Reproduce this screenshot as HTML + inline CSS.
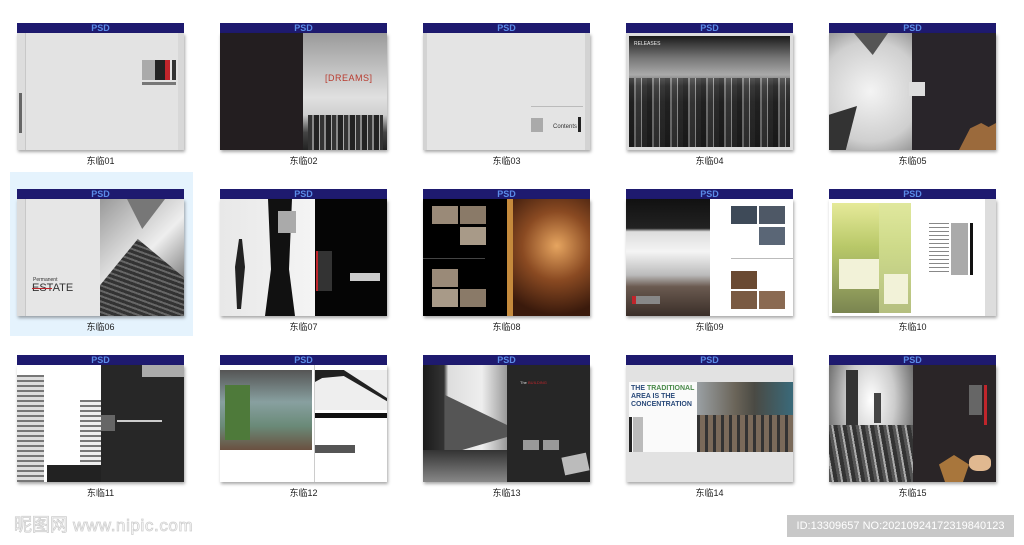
<!DOCTYPE html>
<html><head><meta charset="utf-8"><style>
*{margin:0;padding:0;box-sizing:border-box}
body{width:1024px;height:545px;background:#fff;position:relative;overflow:hidden;font-family:"Liberation Sans","Noto Sans CJK SC",sans-serif}
.t{position:absolute;width:167px}
.bar{height:10px;background:#1e1a6f;color:#5b8ce8;font:bold 9px/10px "Liberation Sans",sans-serif;text-align:center}
.img{position:relative;height:117px;overflow:hidden;box-shadow:1px 2px 3px rgba(0,0,0,.35)}
.a{position:absolute}
.lb{position:absolute;width:167px;text-align:center;font-size:9px;color:#222;line-height:12px}
.sel{position:absolute;left:10px;top:172px;width:183px;height:164px;background:#e5f3fd}
.ln{position:absolute;height:1px;background:#bbb}
</style></head><body>
<div class="sel"></div>

<div class="t" style="left:17px;top:23px"><div class="bar">PSD</div><div class="img" style="background:#e3e3e3">
<div class="a" style="left:0;top:0;width:9px;height:117px;background:#ddd;border-right:1px solid #c8c8c8"></div>
<div class="a" style="left:2px;top:60px;width:3px;height:40px;background:#666"></div>
<div class="a" style="left:125px;top:27px;width:13px;height:20px;background:#aaa"></div>
<div class="a" style="left:138px;top:27px;width:10px;height:20px;background:#222"></div>
<div class="a" style="left:148px;top:27px;width:5px;height:20px;background:#c0252b"></div>
<div class="a" style="left:155px;top:27px;width:4px;height:20px;background:#333"></div>
<div class="a" style="left:125px;top:49px;width:34px;height:3px;background:#777"></div>
<div class="a" style="left:161px;top:0;width:6px;height:117px;background:#d8d8d8"></div>
</div></div>
<div class="lb" style="left:17px;top:155px">东临01</div>

<div class="t" style="left:220px;top:23px"><div class="bar">PSD</div><div class="img" style="background:#231e20">
<div class="a" style="left:83px;top:0;width:84px;height:117px;background:linear-gradient(#9a9a9a,#e0e0e0 55%,#cfcfcf 70%,#444 85%,#222)"></div>
<div class="a" style="left:88px;top:82px;width:75px;height:35px;background:repeating-linear-gradient(90deg,#333 0 4px,#888 4px 6px,#222 6px 11px,#aaa 11px 12px)"></div>
<div class="a" style="left:105px;top:40px;font-size:9px;color:#b83a2e;letter-spacing:.5px">[DREAMS]</div>
</div></div>
<div class="lb" style="left:220px;top:155px">东临02</div>

<div class="t" style="left:423px;top:23px"><div class="bar">PSD</div><div class="img" style="background:#e4e4e4">
<div class="a" style="left:0;top:0;width:4px;height:117px;background:#d3d3d3"></div>
<div class="a" style="left:162px;top:0;width:5px;height:117px;background:#d3d3d3"></div>
<div class="ln" style="left:108px;top:73px;width:52px"></div>
<div class="a" style="left:108px;top:85px;width:12px;height:14px;background:#aaa"></div>
<div class="a" style="left:130px;top:91px;font-size:6px;color:#333">Contents</div>
<div class="a" style="left:155px;top:84px;width:3px;height:15px;background:#222"></div>
</div></div>
<div class="lb" style="left:423px;top:155px">东临03</div>

<div class="t" style="left:626px;top:23px"><div class="bar">PSD</div><div class="img" style="background:#ddd">
<div class="a" style="left:3px;top:3px;width:161px;height:111px;background:linear-gradient(#1a1a1a,#777 20%,#aaa 35%,#555 45%,#333 60%,#222)"></div>
<div class="a" style="left:3px;top:45px;width:161px;height:69px;background:repeating-linear-gradient(90deg,#111 0 5px,#999 5px 7px,#333 7px 12px,#ccc 12px 13px,#222 13px 18px);opacity:.55"></div>
<div class="a" style="left:8px;top:8px;font-size:5px;color:#eee">RELEASES</div>
</div></div>
<div class="lb" style="left:626px;top:155px">东临04</div>

<div class="t" style="left:829px;top:23px"><div class="bar">PSD</div><div class="img" style="background:#29252a">
<div class="a" style="left:0;top:0;width:83px;height:117px;background:radial-gradient(circle at 50% 50%,#f4f4f4,#cfcfcf 70%,#999)"></div>
<div class="a" style="left:25px;top:0;width:34px;height:22px;background:#555;clip-path:polygon(0 0,100% 0,55% 100%)"></div>
<div class="a" style="left:0;top:73px;width:28px;height:44px;background:#333;clip-path:polygon(0 20%,100% 0,60% 100%,0 100%)"></div>
<div class="a" style="left:80px;top:49px;width:16px;height:14px;background:#ddd"></div>
<div class="a" style="left:130px;top:90px;width:37px;height:27px;background:#9b6a3c;clip-path:polygon(30% 20%,60% 0,80% 15%,100% 0,100% 100%,0 100%)"></div>
</div></div>
<div class="lb" style="left:829px;top:155px">东临05</div>

<div class="t" style="left:17px;top:189px"><div class="bar">PSD</div><div class="img" style="background:#e6e6e6">
<div class="a" style="left:0;top:0;width:9px;height:117px;background:#dcdcdc;border-right:1px solid #c8c8c8"></div>
<div class="a" style="left:83px;top:0;width:84px;height:117px;background:linear-gradient(135deg,#999,#eee 50%,#444)"></div>
<div class="a" style="left:83px;top:40px;width:84px;height:77px;background:repeating-linear-gradient(20deg,#333 0 3px,#666 3px 5px);clip-path:polygon(0 60%,45% 0,100% 50%,100% 100%,0 100%)"></div>
<div class="a" style="left:110px;top:0;width:38px;height:30px;background:#777;clip-path:polygon(0 0,100% 0,40% 100%)"></div>
<div class="a" style="left:16px;top:78px;font-size:5px;color:#333">Permanent</div>
<div class="a" style="left:15px;top:84px;font-size:11px;color:#333;line-height:11px">ESTATE</div>
<div class="a" style="left:15px;top:89px;width:20px;height:1px;background:#c0252b"></div>
</div></div>
<div class="lb" style="left:17px;top:321px">东临06</div>

<div class="t" style="left:220px;top:189px"><div class="bar">PSD</div><div class="img" style="background:#050505">
<div class="a" style="left:0;top:0;width:95px;height:117px;background:linear-gradient(90deg,#e8e8e8,#f4f4f4)"></div>
<div class="a" style="left:45px;top:0;width:30px;height:117px;background:#111;clip-path:polygon(10% 0,90% 0,80% 60%,100% 100%,0 100%,20% 60%)"></div>
<div class="a" style="left:58px;top:12px;width:18px;height:22px;background:#aaa"></div>
<div class="a" style="left:15px;top:40px;width:10px;height:70px;background:#222;clip-path:polygon(40% 0,70% 0,100% 40%,60% 100%,20% 100%,0 40%)"></div>
<div class="a" style="left:96px;top:52px;width:2px;height:40px;background:#c0252b"></div>
<div class="a" style="left:98px;top:52px;width:14px;height:40px;background:#333"></div>
<div class="a" style="left:130px;top:74px;width:30px;height:8px;background:#ccc"></div>
</div></div>
<div class="lb" style="left:220px;top:321px">东临07</div>

<div class="t" style="left:423px;top:189px"><div class="bar">PSD</div><div class="img" style="background:#000">
<div class="a" style="left:84px;top:0;width:83px;height:117px;background:radial-gradient(circle at 60% 40%,#e6a560,#8a4a22 40%,#3a1a0c 80%)"></div>
<div class="a" style="left:84px;top:0;width:6px;height:117px;background:#c58a3c"></div>
<div class="a" style="left:9px;top:7px;width:26px;height:18px;background:#9a8a78"></div>
<div class="a" style="left:37px;top:7px;width:26px;height:18px;background:#8a7a68"></div>
<div class="a" style="left:37px;top:28px;width:26px;height:18px;background:#a89a88"></div>
<div class="a" style="left:9px;top:70px;width:26px;height:18px;background:#9a8a78"></div>
<div class="a" style="left:9px;top:90px;width:26px;height:18px;background:#a89a88"></div>
<div class="a" style="left:37px;top:90px;width:26px;height:18px;background:#8a7a68"></div>
<div class="ln" style="left:0;top:59px;width:62px;background:#444"></div>
</div></div>
<div class="lb" style="left:423px;top:321px">东临08</div>

<div class="t" style="left:626px;top:189px"><div class="bar">PSD</div><div class="img" style="background:#fff">
<div class="a" style="left:0;top:0;width:84px;height:117px;background:linear-gradient(#111 0,#222 25%,#ddd 28%,#f4f4f4 45%,#bbb 65%,#6a5a50 75%,#3a2e28)"></div>
<div class="a" style="left:6px;top:97px;width:28px;height:8px;background:#888"></div>
<div class="a" style="left:6px;top:97px;width:4px;height:8px;background:#c0252b"></div>
<div class="a" style="left:105px;top:7px;width:26px;height:18px;background:#3e4a58"></div>
<div class="a" style="left:133px;top:7px;width:26px;height:18px;background:#4e5866"></div>
<div class="a" style="left:133px;top:28px;width:26px;height:18px;background:#5a6676"></div>
<div class="ln" style="left:105px;top:59px;width:62px"></div>
<div class="a" style="left:105px;top:72px;width:26px;height:18px;background:#6a4a32"></div>
<div class="a" style="left:105px;top:92px;width:26px;height:18px;background:#7a5a42"></div>
<div class="a" style="left:133px;top:92px;width:26px;height:18px;background:#8a6a52"></div>
</div></div>
<div class="lb" style="left:626px;top:321px">东临09</div>

<div class="t" style="left:829px;top:189px"><div class="bar">PSD</div><div class="img" style="background:#fff">
<div class="a" style="left:3px;top:4px;width:79px;height:110px;background:linear-gradient(#e6ea9a,#b8c868 40%,#9aa860 70%,#7a8450)"></div>
<div class="a" style="left:50px;top:4px;width:32px;height:110px;background:rgba(220,230,160,.6)"></div>
<div class="a" style="left:10px;top:60px;width:40px;height:30px;background:#f2f2d8"></div>
<div class="a" style="left:55px;top:75px;width:24px;height:30px;background:#f2f2d8"></div>
<div class="a" style="left:100px;top:24px;width:20px;height:50px;background:repeating-linear-gradient(#888 0 1px,#fff 1px 4px)"></div>
<div class="a" style="left:122px;top:24px;width:17px;height:52px;background:#aaa"></div>
<div class="a" style="left:141px;top:24px;width:3px;height:52px;background:#111"></div>
<div class="a" style="left:156px;top:0;width:11px;height:117px;background:#ddd"></div>
</div></div>
<div class="lb" style="left:829px;top:321px">东临10</div>

<div class="t" style="left:17px;top:355px"><div class="bar">PSD</div><div class="img" style="background:#272727">
<div class="a" style="left:0;top:0;width:84px;height:117px;background:#fff"></div>
<div class="a" style="left:0;top:10px;width:27px;height:107px;background:repeating-linear-gradient(#777 0 2px,#ddd 2px 5px)"></div>
<div class="a" style="left:63px;top:35px;width:21px;height:72px;background:repeating-linear-gradient(#777 0 2px,#eee 2px 5px)"></div>
<div class="a" style="left:30px;top:100px;width:54px;height:17px;background:#222"></div>
<div class="a" style="left:125px;top:0;width:42px;height:12px;background:#aaa"></div>
<div class="a" style="left:84px;top:50px;width:14px;height:16px;background:#666"></div>
<div class="a" style="left:100px;top:55px;width:45px;height:2px;background:#ccc"></div>
</div></div>
<div class="lb" style="left:17px;top:487px">东临11</div>

<div class="t" style="left:220px;top:355px"><div class="bar">PSD</div><div class="img" style="background:#fff">
<div class="a" style="left:0;top:5px;width:92px;height:80px;background:linear-gradient(#555,#88a0a0 40%,#6a8a78 70%,#6a5040)"></div>
<div class="a" style="left:5px;top:20px;width:25px;height:55px;background:#4e7a3a"></div>
<div class="a" style="left:95px;top:5px;width:72px;height:40px;background:#eee"></div>
<div class="a" style="left:95px;top:5px;width:72px;height:40px;background:#222;clip-path:polygon(0 0,40% 0,100% 70%,100% 78%,40% 15%,10% 20%,0 30%)"></div>
<div class="a" style="left:95px;top:48px;width:72px;height:5px;background:#111"></div>
<div class="a" style="left:95px;top:80px;width:40px;height:8px;background:#555"></div>
<div class="a" style="left:94px;top:0;width:1px;height:117px;background:#ccc"></div>
</div></div>
<div class="lb" style="left:220px;top:487px">东临12</div>

<div class="t" style="left:423px;top:355px"><div class="bar">PSD</div><div class="img" style="background:#262626">
<div class="a" style="left:0;top:0;width:84px;height:117px;background:linear-gradient(90deg,#1a1a1a 0,#333 25%,#ddd 30%,#eee 70%,#999)"></div>
<div class="a" style="left:22px;top:30px;width:62px;height:60px;background:#555;clip-path:polygon(0 0,100% 50%,100% 70%,0 100%)"></div>
<div class="a" style="left:0;top:85px;width:84px;height:32px;background:linear-gradient(#333,#888)"></div>
<div class="a" style="left:97px;top:15px;font-size:4px;color:#ddd">The <span style="color:#c0252b">BUILDING</span></div>
<div class="a" style="left:100px;top:75px;width:16px;height:10px;background:#999"></div>
<div class="a" style="left:120px;top:75px;width:16px;height:10px;background:#999"></div>
<div class="a" style="left:140px;top:90px;width:25px;height:18px;background:#bbb;transform:rotate(-12deg)"></div>
</div></div>
<div class="lb" style="left:423px;top:487px">东临13</div>

<div class="t" style="left:626px;top:355px"><div class="bar">PSD</div><div class="img" style="background:#e2e2e2">
<div class="a" style="left:3px;top:17px;width:68px;height:70px;background:#fafafa"></div>
<div class="a" style="left:5px;top:20px;font:bold 7px/8px 'Liberation Sans',sans-serif;color:#2a4a7a">THE <span style="color:#4a8a4a">TRADITIONAL</span><br>AREA IS THE<br>CONCENTRATION</div>
<div class="a" style="left:3px;top:52px;width:3px;height:35px;background:#222"></div>
<div class="a" style="left:7px;top:52px;width:10px;height:35px;background:#bbb"></div>
<div class="a" style="left:71px;top:17px;width:96px;height:70px;background:linear-gradient(90deg,#9aa0a4,#6a6458 40%,#4a4a44 60%,#3a6a7a)"></div>
<div class="a" style="left:71px;top:50px;width:96px;height:37px;background:repeating-linear-gradient(90deg,#333 0 3px,#7a6a5a 3px 8px)"></div>
</div></div>
<div class="lb" style="left:626px;top:487px">东临14</div>

<div class="t" style="left:829px;top:355px"><div class="bar">PSD</div><div class="img" style="background:#2a2527">
<div class="a" style="left:0;top:0;width:84px;height:117px;background:radial-gradient(ellipse at 50% 30%,#fff,#ccc 40%,#666 80%,#222)"></div>
<div class="a" style="left:17px;top:5px;width:12px;height:55px;background:#333"></div>
<div class="a" style="left:45px;top:28px;width:7px;height:30px;background:#444"></div>
<div class="a" style="left:0;top:60px;width:84px;height:57px;background:repeating-linear-gradient(80deg,#555 0 3px,#aaa 3px 5px,#333 5px 9px)"></div>
<div class="a" style="left:140px;top:20px;width:13px;height:30px;background:#666"></div>
<div class="a" style="left:155px;top:20px;width:3px;height:40px;background:#c0252b"></div>
<div class="a" style="left:110px;top:90px;width:30px;height:27px;background:#a8763c;clip-path:polygon(50% 0,100% 35%,80% 100%,20% 100%,0 35%)"></div>
<div class="a" style="left:140px;top:90px;width:22px;height:16px;background:#e0b890;border-radius:40%"></div>
</div></div>
<div class="lb" style="left:829px;top:487px">东临15</div>

<div class="a" style="left:14px;top:514px;font-size:18px;line-height:22px;color:#fff;-webkit-text-stroke:.8px #cfcfcf;white-space:nowrap">昵图网 <span style="font-size:17px;letter-spacing:.6px">www.nipic.com</span></div>
<div class="a" style="left:787px;top:515px;width:227px;height:22px;background:#c8c8c8;color:#fff;font-size:11px;line-height:22px;text-align:center;white-space:nowrap">ID:13309657 NO:20210924172319840123</div>
</body></html>
